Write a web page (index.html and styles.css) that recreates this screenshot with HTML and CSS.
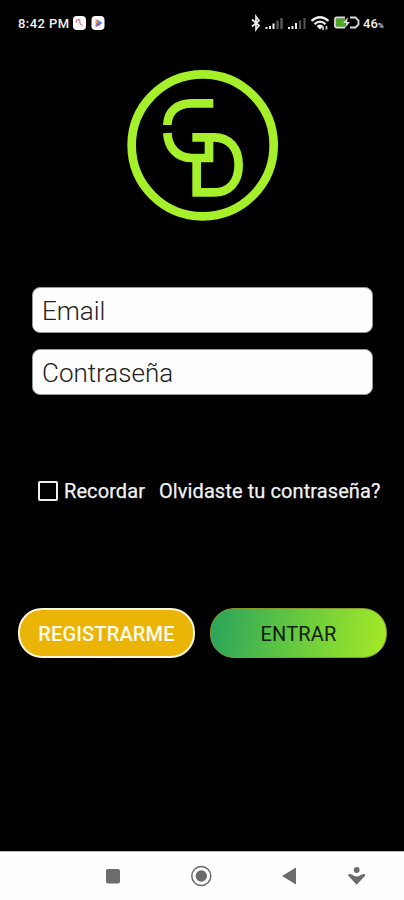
FILE: index.html
```
<!DOCTYPE html>
<html lang="es">
<head>
<meta charset="utf-8">
<title>Acceso</title>
<link rel="stylesheet" href="styles.css">
</head>
<body>
<header class="status">
  <span class="time">8:42 PM</span>
  <svg class="apps" width="34" height="16" viewBox="0 0 34 16">
    <rect x="1" y="1" width="13" height="14" rx="4" fill="#fff"/>
    <path d="M4.500 8V5l3-.5.5 4 2.500 2" fill="none" stroke="#dd7f98" stroke-width="1.300"/>
    <rect x="19.500" y="1" width="13" height="14" rx="4" fill="#fff"/>
    <path d="M23.500 4l3 2-2 5-1 1z" fill="#f29a38"/><path d="M24.500 4l6 4-3 2z" fill="#438bea"/><path d="M23.500 12l2-5 3 3z" fill="#8d4fd8"/>
  </svg>
  <svg class="indicators" width="112" height="18" viewBox="0 0 112 18">
    <path d="M2 5.500l7 6-3 4V2.500l3 4-7 6" fill="none" stroke="#eee" stroke-width="1.700"/>
    <path d="M16.500 15v-2M20 15v-3M23.500 15V9.500" stroke="#eee" stroke-width="2"/>
    <path d="M27.500 15V6.500M31.500 15V4" stroke="#555" stroke-width="2.500"/>
    <path d="M39 15v-2M42.500 15v-3M46 15V9" stroke="#eee" stroke-width="2"/>
    <path d="M50 15V6.500M54.500 15V4" stroke="#555" stroke-width="2"/>
    <path d="M61.500 7Q70-.5 78.500 7M64.500 10.200Q70 5 75.500 10.200" fill="none" stroke="#eee" stroke-width="2.300"/>
    <path d="M66.500 12Q70 9 73.500 12L70 15.500z" fill="#eee"/>
    <path d="M73 12.500v3.500M76.500 12v3.500" stroke="#ccc" stroke-width="1.700"/>
    <rect x="86" y="4.500" width="9.500" height="8" fill="#49a91f"/>
    <path d="M95 3.500H87q-2 0-2 2v6q0 2 2 2h8M100 3.500h5.500l3 3v4l-3 3H100" fill="none" stroke="#ddd" stroke-width="1.800"/>
    <path d="M98 3l-5 6h3l-1 5 5-6h-3z" fill="#ddd"/>
  </svg>
  <span class="battery">46<small>%</small></span>
</header>
<main>
  <svg class="logo" width="165" height="170" viewBox="0 0 495 510">
    <g fill="none" stroke="#a5f02b" stroke-width="26">
      <circle cx="248" cy="256" r="213"/>
      <path d="M280 130H216C170 130 143 155 142 195"/>
      <path d="M142 219C144 264 173 294 216 294H267V232"/>
      <path d="M217 232H282C328 232 356 264 356 315S328 397 282 397H230V294"/>
    </g>
  </svg>
  <form class="login">
    <input type="text" placeholder="Email" aria-label="Email">
    <input type="password" placeholder="Contraseña" aria-label="Contraseña">
    <div class="options">
      <label><i class="box"></i><span class="remember">Recordar</span></label>
      <span class="forgot">Olvidaste tu contraseña?</span>
    </div>
    <div class="actions">
      <button type="button" class="register">REGISTRARME</button>
      <button type="button" class="enter">ENTRAR</button>
    </div>
  </form>
</main>
<nav>
  <svg width="404" height="48" viewBox="0 0 404 48" fill="#6c6c6c">
    <rect x="106" y="17" width="14" height="14.500" rx="2"/>
    <circle cx="201.300" cy="24" r="9.500" fill="none" stroke="#6c6c6c" stroke-width="1.500"/>
    <circle cx="201.300" cy="24" r="5.700"/>
    <path d="M296 15.500v17L282 24z"/>
    <circle cx="356.700" cy="18" r="2.900"/>
    <path d="M348.500 22q3.500-.5 5 1.500 3.200 2 6.400 0 1.600-2 5-1.500v2l-8.200 8.700-8.200-8.700z"/>
  </svg>
</nav>
</body>
</html>
```

FILE: styles.css
```
* { box-sizing: border-box; }
body {
  margin: 0;
  width: 404px;
  height: 900px;
  display: flex;
  flex-direction: column;
  overflow: hidden;
  background: #000;
  color: #f2f2f2;
  font-family: Roboto, sans-serif;
}
.status {
  height: 46px;
  padding: 0 19px 0 18px;
  display: flex;
  align-items: center;
  font-size: 13px;
  font-weight: 500;
}
.time { width: 54px; letter-spacing: .45px; white-space: nowrap; }
.indicators { margin-left: auto; }
.battery { width: 22px; margin-left: 1px; white-space: nowrap; }
.battery small { font-size: 8px; }
main { flex: 1; padding-top: 14px; }
.logo { display: block; margin-left: 120px; }
.login { margin-top: 57px; }
input {
  display: block;
  width: 341px;
  height: 46px;
  margin: 0 0 16px 32px;
  padding: 2px 9px 0;
  border: 1px solid #999;
  border-radius: 8px;
  background: #fefefe;
  font: 300 26px Roboto, sans-serif;
}
input::placeholder { color: #222; opacity: 1; }
.options {
  height: 30px;
  margin: 81px 0 0 38px;
  display: flex;
  align-items: center;
  font-size: 20px;
  letter-spacing: .09px;
  -webkit-text-stroke: .25px #f2f2f2;
  white-space: nowrap;
}
label { width: 121px; display: flex; align-items: center; }
.box { width: 20px; height: 20px; margin-right: 6px; border: 2px solid #eee; border-radius: 2px; }
.actions { display: flex; gap: 15px; margin: 102px 0 0 18px; }
button {
  width: 177px;
  height: 50px;
  padding: 1px 0 0;
  border: 2px solid #fff6dc;
  border-radius: 24px;
  font: 500 20px Roboto, sans-serif;
  letter-spacing: .15px;
}
.register { background: #eab507; color: #fffbed; }
.enter {
  border: 1px solid #829b2c;
  background: linear-gradient(100deg, #29a35c, #67ca3d 50%, #a7e926);
  color: #10200b;
  font-weight: 400;
}
nav { height: 49px; border-top: 1px solid #bbb; background: #fefefe; }
nav svg { display: block; }
```
